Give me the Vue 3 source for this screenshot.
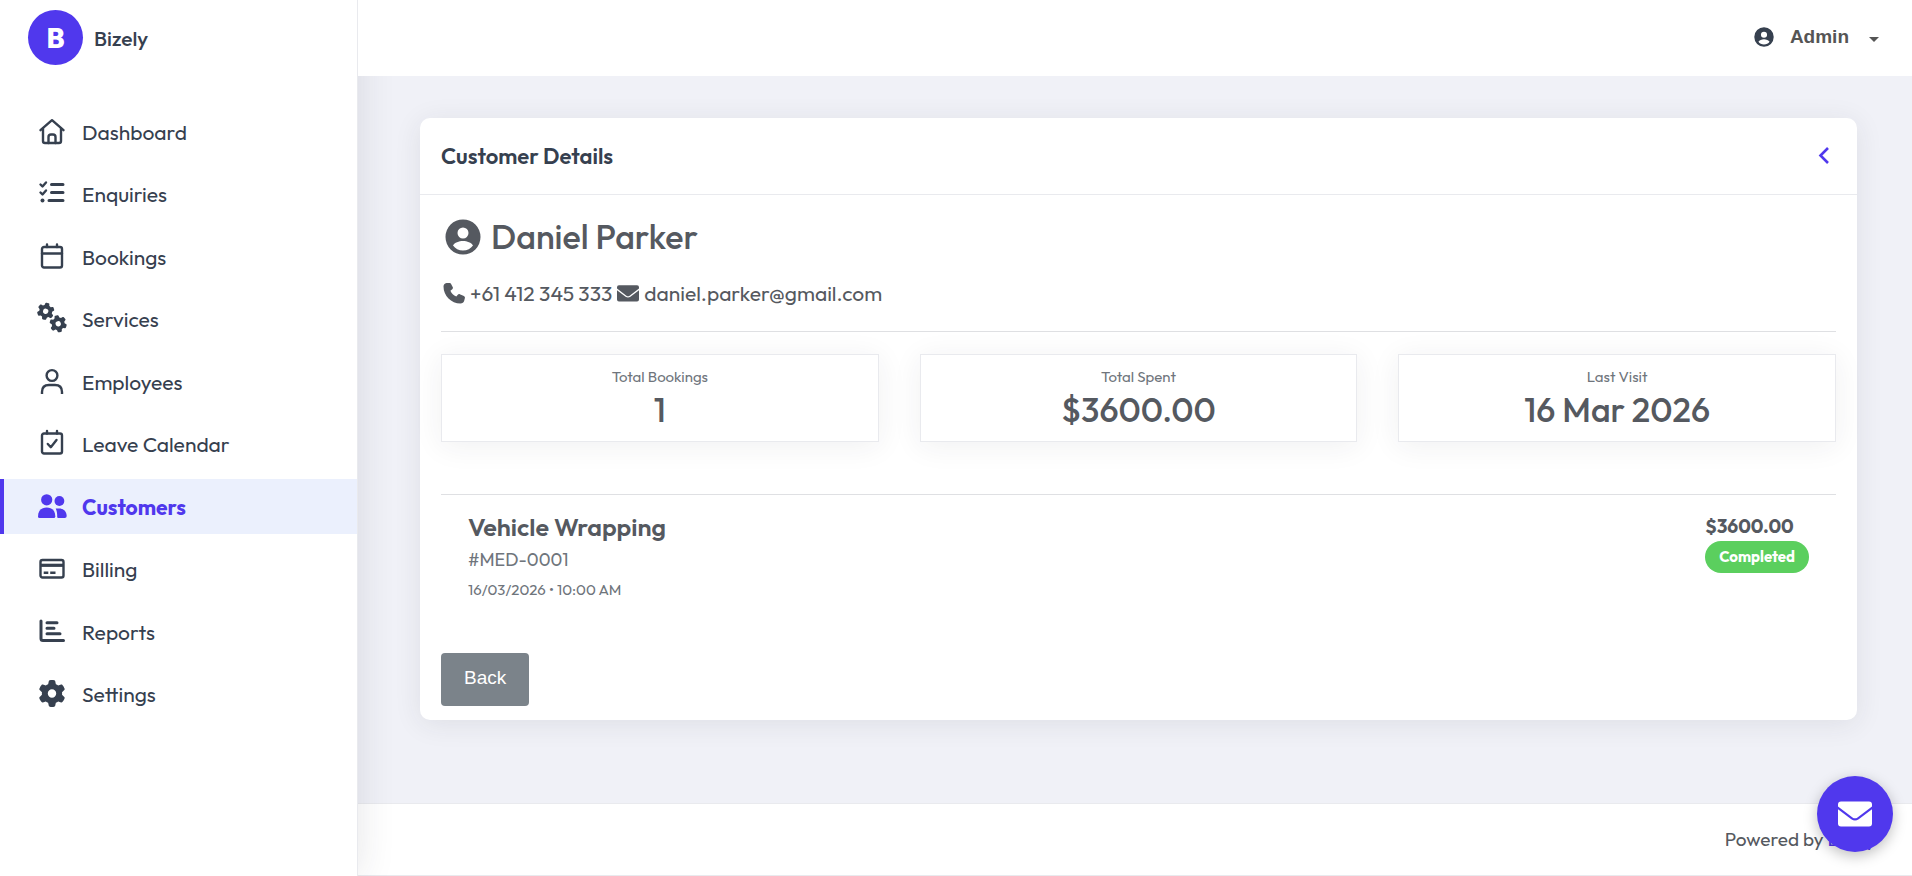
<template>
  <div class="layout">
    <aside class="sidebar">
      <a href="#" class="brand">
        <span class="brand-logo">B</span>
        <span class="brand-name">Bizely</span>
      </a>

      <nav class="menu">
        <a
          v-for="item in menu"
          :key="item.label"
          href="#"
          class="menu-item"
          :class="{ active: item.label === current }"
          @click.prevent="current = item.label"
        >
          <svg class="menu-icon" viewBox="0 0 30 30" aria-hidden="true">
            <g v-if="item.icon === 'home'" class="line">
              <path d="M3.500 13.200 15 3.200l11.500 10" />
              <path d="M6 11.500V24q0 2 2 2h14q2 0 2-2V11.500" />
              <path d="M11.500 26v-6q0-2.500 2.500-2.500h2q2.500 0 2.500 2.500v6" />
            </g>
            <g v-else-if="item.icon === 'tasks'">
              <path class="line heavy" d="M14.500 5.500H26M14.500 13.500H26M12 21.500h14" />
              <path class="line" d="m3.500 5.500 2 2L9 3.500M3.500 13.500l2 2L9 11.500" />
              <circle cx="5.500" cy="21.500" r="2" />
            </g>
            <g v-else-if="item.icon === 'calendar'" class="line">
              <rect x="5" y="5" width="20" height="20.500" rx="2" />
              <path d="M5 11.500h20M10 2.500V5M20 2.500V5" />
            </g>
            <g v-else-if="item.icon === 'gears'">
              <path :d="gear" transform="translate(8.700 7.300) rotate(12) scale(.0335) translate(-256 -256)" />
              <path :d="gear" transform="translate(21.200 19.800) rotate(-12) scale(.0335) translate(-256 -256)" />
            </g>
            <g v-else-if="item.icon === 'person'" class="line butt">
              <circle cx="15" cy="8.500" r="5.400" />
              <path d="M5 27v-2q0-7 7-7h6q7 0 7 7v2" />
            </g>
            <g v-else-if="item.icon === 'calendar-check'" class="line">
              <rect x="5" y="4.500" width="20" height="20" rx="2" />
              <path d="M10 2v2.500M20 2v2.500M10.800 15l3 3.200L19.500 11" />
            </g>
            <g v-else-if="item.icon === 'people'">
              <circle cx="9.700" cy="7.800" r="5.600" />
              <circle cx="22.400" cy="9" r="4.900" />
              <path d="M1 24.500C1 19 4 15.500 9.700 15.500S18.300 19 18.300 24.500q0 1.500-1.500 1.500H2.500Q1 26 1 24.500Z" />
              <path d="M18.700 16.500h3.500c4.500 0 7.500 3 7.500 7.500q0 2-2 2h-6.500q-1 0-1-1c0-3.500-.2-6-1.500-8.500Z" />
            </g>
            <g v-else-if="item.icon === 'card'">
              <rect class="line" x="3.500" y="6" width="23" height="17.500" rx="2" />
              <path d="M3.500 9.700h23v3.200h-23z" />
              <path class="line butt" d="M6.700 18.800h4.600M13.200 18.800h5.300" />
            </g>
            <g v-else-if="item.icon === 'chart'" class="line heavy">
              <path d="M4 4v17.500q0 2 2 2h20.500M10 5.700h10M10 11.200h7M10 16.700h13" />
            </g>
            <path v-else :d="gear" transform="translate(1.500 1) scale(.0527)" />
          </svg>
          <span>{{ item.label }}</span>
        </a>
      </nav>
    </aside>

    <div class="page">
      <header class="topbar">
        <button type="button" class="account">
          <svg class="account-icon" viewBox="0 0 36 36" aria-hidden="true">
            <path :d="userCircle" fill-rule="evenodd" />
          </svg>
          <span>Admin</span>
          <span class="caret"></span>
        </button>
      </header>

      <main class="content">
        <section class="card">
          <div class="card-header">
            <h1>Customer Details</h1>
            <a href="#" class="card-back" aria-label="Back to customers">
              <svg viewBox="0 0 12 18" aria-hidden="true"><path d="M10 1 2.500 8.500 10 16" /></svg>
            </a>
          </div>

          <div class="card-body">
            <h2 class="customer">
              <svg viewBox="0 0 36 36" aria-hidden="true">
                <path :d="userCircle" fill-rule="evenodd" />
              </svg>
              <span>{{ customer.name }}</span>
            </h2>
            <div class="contacts">
              <svg viewBox="0 0 22 22" aria-hidden="true">
                <path d="M6.800 1.100 3.500.9C1.500 1.100.5 2.700.5 4.500.5 13.800 8.200 21.500 17.500 21.500c1.800 0 3.200-1 3.700-2.800l.7-2.700c.2-.9-.2-1.700-1-2.100l-4.100-1.700c-.7-.3-1.500-.1-2 .5l-1.500 1.900C10.500 13.300 8.700 11.500 7.400 8.700l1.900-1.500c.6-.5.8-1.300.5-2L8.100 2c-.3-.6-.8-.8-1.300-.9Z" />
              </svg>
              <span>{{ customer.phone }}</span>
              <svg viewBox="0 0 22 22" aria-hidden="true">
                <path :d="envelope" transform="translate(0 3) scale(.647)" />
              </svg>
              <span>{{ customer.email }}</span>
            </div>

            <div class="stats">
              <div v-for="stat in stats" :key="stat.label" class="stat">
                <div class="stat-label">{{ stat.label }}</div>
                <div class="stat-value">{{ stat.value }}</div>
              </div>
            </div>

            <div v-for="booking in bookings" :key="booking.id" class="booking">
              <div>
                <h3>{{ booking.title }}</h3>
                <div class="booking-id">{{ booking.id }}</div>
                <div class="booking-date">{{ booking.date }}</div>
              </div>
              <div>
                <div class="booking-price">{{ booking.price }}</div>
                <span class="badge">{{ booking.status }}</span>
              </div>
            </div>

            <button type="button" class="back-btn">Back</button>
          </div>
        </section>
      </main>

      <footer class="footer">Powered by <a href="#">Bizely</a></footer>
    </div>

    <!-- floating contact button -->
    <button type="button" class="fab" aria-label="Send a message">
      <svg viewBox="0 0 34 26" aria-hidden="true"><path :d="envelope" /></svg>
    </button>
  </div>
</template>

<script setup>
import { ref } from 'vue'

const current = ref('Customers')

const menu = [
  { label: 'Dashboard', icon: 'home' },
  { label: 'Enquiries', icon: 'tasks' },
  { label: 'Bookings', icon: 'calendar' },
  { label: 'Services', icon: 'gears' },
  { label: 'Employees', icon: 'person' },
  { label: 'Leave Calendar', icon: 'calendar-check' },
  { label: 'Customers', icon: 'people' },
  { label: 'Billing', icon: 'card' },
  { label: 'Reports', icon: 'chart' },
  { label: 'Settings', icon: 'gear' }
]

const customer = {
  name: 'Daniel Parker',
  phone: '+61 412 345 333',
  email: 'daniel.parker@gmail.com'
}

const stats = [
  { label: 'Total Bookings', value: '1' },
  { label: 'Total Spent', value: '$3600.00' },
  { label: 'Last Visit', value: '16 Mar 2026' }
]

const bookings = [
  {
    id: '#MED-0001',
    title: 'Vehicle Wrapping',
    date: '16/03/2026 • 10:00 AM',
    price: '$3600.00',
    status: 'Completed'
  }
]

// icon shapes used more than once
const gear =
  'M495.9 166.6c3.2 8.7 .5 18.4-6.4 24.6l-43.3 39.4c1.1 8.3 1.7 16.8 1.7 25.4s-.6 17.1-1.7 25.4l43.3 39.4c6.9 6.2 9.6 15.9 6.4 24.6c-4.4 11.9-9.7 23.3-15.8 34.3l-4.7 8.1c-6.6 11-14 21.4-22.1 31.2c-5.9 7.2-15.7 9.6-24.5 6.8l-55.7-17.7c-13.4 10.3-28.2 18.9-44 25.4l-12.5 57.1c-2 9.1-9 16.3-18.2 17.8c-13.8 2.3-28 3.5-42.5 3.5s-28.7-1.2-42.5-3.5c-9.2-1.5-16.2-8.7-18.2-17.8l-12.5-57.1c-15.8-6.5-30.6-15.1-44-25.4L83.1 425.9c-8.8 2.8-18.6 .3-24.5-6.8c-8.1-9.8-15.5-20.2-22.1-31.2l-4.7-8.1c-6.1-11-11.4-22.4-15.8-34.3c-3.2-8.7-.5-18.4 6.4-24.6l43.3-39.4C64.6 273.1 64 264.6 64 256s.6-17.1 1.7-25.4L22.4 191.2c-6.9-6.2-9.6-15.9-6.4-24.6c4.4-11.9 9.7-23.3 15.8-34.3l4.7-8.1c6.6-11 14-21.4 22.1-31.2c5.9-7.2 15.7-9.6 24.5-6.8l55.7 17.7c13.4-10.3 28.2-18.9 44-25.4l12.5-57.1c2-9.1 9-16.3 18.2-17.8C227.3 1.2 241.5 0 256 0s28.7 1.2 42.5 3.5c9.2 1.5 16.2 8.7 18.2 17.8l12.5 57.1c15.8 6.5 30.6 15.1 44 25.4l55.7-17.7c8.8-2.8 18.6-.3 24.5 6.8c8.1 9.8 15.5 20.2 22.1 31.2l4.7 8.1c6.1 11 11.4 22.4 15.8 34.3zM256 336a80 80 0 1 0 0-160 80 80 0 1 0 0 160z'
const userCircle =
  'M18 .5a17.500 17.500 0 1 0 0 35a17.500 17.500 0 1 0 0-35ZM18 8.500a5.500 5.500 0 1 1 0 11a5.500 5.500 0 1 1 0-11ZM18 31.500c-4.200 0-7.800-2-10-5 1.500-3 6-4.500 10-4.500s8.500 1.500 10 4.500c-2.200 3-5.800 5-10 5Z'
const envelope =
  'M3 .5h28a3 3 0 0 1 3 3v2L19.500 16.500q-2.500 1.700-5 0L0 5.500v-2a3 3 0 0 1 3-3ZM0 8.200 13.300 18.300q3.700 2.400 7.400 0L34 8.200V22.500a3 3 0 0 1-3 3H3a3 3 0 0 1-3-3Z'
</script>

<style>
body { margin: 0; }
</style>

<style scoped>
.layout { display: flex; min-height: 100vh; font-family: Outfit, Lato, sans-serif; font-size: 21px; line-height: 28px; color: #555960; background: #f0f1f7; }
.layout *, .layout *::before { box-sizing: border-box; }
a { color: inherit; text-decoration: none; }
button { border: 0; font-family: "Liberation Sans", Arial, sans-serif; font-size: 19px; cursor: pointer; }
h1, h2, h3 { margin: 0; font-weight: 500; }
svg { display: block; flex: none; fill: currentColor; }

/* sidebar */
.sidebar { position: relative; flex: none; width: 358px; background: #fff; border-right: 1px solid #e9eaee; box-shadow: 0 0 36px rgba(40, 40, 60, 0.12); color: #36404f; }
.brand { display: flex; align-items: center; gap: 11px; height: 75px; padding-left: 28px; }
.brand-logo { display: flex; align-items: center; justify-content: center; width: 55px; height: 55px; border-radius: 50%; background: #5038ed; color: #fff; font-size: 28px; font-weight: 800; }
.brand-name { font-weight: 500; }
.menu { display: flex; flex-direction: column; justify-content: space-between; min-height: 647px; padding-top: 29px; }
.menu-item { display: flex; align-items: center; gap: 15px; height: 55px; padding-left: 33px; border-left: 4px solid transparent; }
.menu-item.active { border-left-color: #5038ed; background: #ebf0fd; color: #5038ed; font-weight: 700; }
.menu-icon { width: 30px; height: 30px; overflow: visible; }
.line { fill: none; stroke: currentColor; stroke-width: 2.4; stroke-linecap: round; stroke-linejoin: round; }
.heavy { stroke-width: 3; }
.butt { stroke-linecap: butt; }

/* top bar */
.page { flex: 1; min-width: 0; display: flex; flex-direction: column; }
.topbar { position: relative; display: flex; align-items: center; justify-content: flex-end; height: 76px; padding: 0 33px 2px 0; background: #fff; }
.account { display: flex; align-items: center; padding: 0; background: none; color: #555; font-weight: 700; line-height: 24px; }
.account-icon { width: 20px; height: 20px; margin-right: 16px; color: #36404f; }
.caret { margin: 4px 0 0 20px; border: 5px solid transparent; border-top-color: #555; border-bottom: 0; }

/* card */
.content { flex: 1; padding: 42px 55px 42px 62px; }
.card { border-radius: 10px; background: #fff; box-shadow: 0 4px 28px rgba(40, 40, 60, 0.09); }
.card-header { display: flex; align-items: center; justify-content: space-between; height: 77px; padding: 0 27px 0 21px; border-bottom: 1px solid #e9eaee; color: #36404f; }
.card-header h1 { font-size: 22px; font-weight: 600; }
.card-back { color: #5038ed; }
.card-back svg { width: 12px; height: 18px; fill: none; stroke: currentColor; stroke-width: 2.6; overflow: visible; }
.card-body { padding: 20px 21px 14px; }
.customer { display: flex; align-items: center; gap: 10px; padding-left: 4px; font-size: 34px; line-height: 44px; }
.customer svg { width: 36px; height: 36px; }
.contacts { display: flex; align-items: center; gap: 5px; padding: 20px 2px 24px; margin-bottom: 22px; border-bottom: 1px solid #dfe0e3; }
.contacts svg { width: 22px; height: 22px; }
.stats { display: grid; grid-template-columns: repeat(3, 1fr); gap: 41px; padding-bottom: 52px; border-bottom: 1px solid #dfe0e3; }
.stat { padding: 11px 12px 9px; border: 1px solid #e9eaee; box-shadow: 0 4px 28px rgba(40, 40, 60, 0.07); text-align: center; }
.stat-label { font-size: 15px; line-height: 22px; color: #6f757c; }
.stat-value { font-size: 34px; font-weight: 500; line-height: 44px; }

/* bookings */
.booking { display: flex; justify-content: space-between; padding: 16px 27px 49px; }
.booking h3 { font-size: 25px; font-weight: 600; line-height: 33px; }
.booking-id { font-size: 18px; line-height: 32px; color: #6f757c; }
.booking-date { font-size: 15px; line-height: 28px; color: #6f757c; }
.booking-price { font-size: 19px; font-weight: 700; line-height: 30px; }
.badge { display: block; padding: 0 14px; border-radius: 16px; background: #5bcf5e; color: #fff; font-size: 15px; font-weight: 700; line-height: 32px; }
.back-btn { display: block; padding: 13px 23px 16px; border-radius: 4px; background: #7b838a; color: #fff; line-height: 24px; }

/* footer */
.footer { padding: 21px 36px 22px; border: solid #e9eaee; border-width: 1px 0; background: #fff; font-size: 19px; text-align: right; }
.footer a { color: #5038ed; }

.fab { position: fixed; right: 19px; bottom: 24px; display: flex; align-items: center; justify-content: center; width: 76px; height: 76px; border-radius: 50%; background: #5038ed; color: #fff; box-shadow: 0 4px 14px rgba(0, 0, 0, 0.25); }
.fab svg { width: 34px; height: 26px; }
</style>
